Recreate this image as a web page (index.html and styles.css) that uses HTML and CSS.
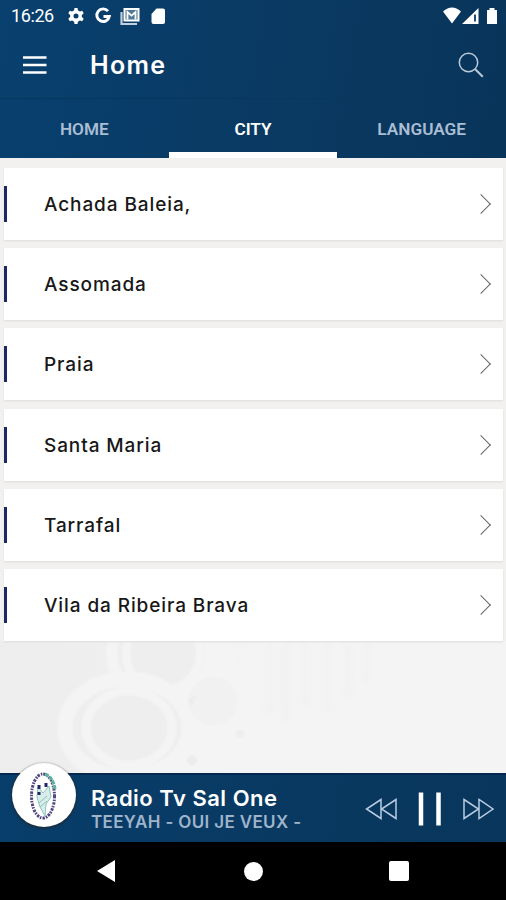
FILE: index.html
```html
<!DOCTYPE html>
<html lang="en">
<head>
<meta charset="utf-8">
<title>Home</title>
<link rel="stylesheet" href="styles.css">
</head>
<body>
<div class="app">
  <header class="header">
    <div class="status">
      <span class="clock">16:26</span>
      <svg class="notices" width="98" height="20" viewBox="0 0 98 20">
        <g fill="#fff">
          <circle cx="8" cy="10" r="4.200" fill="none" stroke="#fff" stroke-width="3.400"/>
          <path d="M6.500 2h3l.6 3h-4.200zM6.500 18h3l.6-3h-4.200zM.3 7.300l1.500-2.500 2.900 1-2.100 3.600zM15.700 7.300l-1.500-2.500-2.900 1 2.100 3.600zM.3 12.700l1.500 2.500 2.900-1-2.100-3.600zM15.700 12.700l-1.500 2.500-2.900-1 2.100-3.600z"/>
          <path d="M83.500 8l5-5.500H95q2 0 2 2V16q0 2-2 2h-9.500q-2 0-2-2z"/>
        </g>
        <path d="M40 5.200A6.300 6.300 0 1 0 41.300 10.500H35.500" fill="none" stroke="#fff" stroke-width="2.900"/>
        <rect x="56.500" y="3" width="14" height="11.500" fill="#dfe7ef" fill-opacity=".35" stroke="#fff" stroke-width="2"/>
        <path d="M59.500 13.500V6l4 3.600 4-3.600v7.500" fill="none" stroke="#fff" stroke-width="1.800"/>
        <path d="M53.500 6v12H69" fill="none" stroke="#c2cfde" stroke-width="2.200"/>
      </svg>
      <svg class="signals" width="58" height="20" viewBox="0 0 58 20">
        <path d="M3 5.500Q12-2.500 21 5.500L12 17.500z" fill="#fff"/>
        <path d="M38.500 2V18H22z" fill="#fff"/>
        <path d="M35 8.500v7" stroke="#0a3961" stroke-width="1.800"/>
        <path d="M47 4h2.500V2h5v2H57v14H47z" fill="#fff"/>
      </svg>
    </div>
    <div class="toolbar">
      <svg width="24" height="20" viewBox="0 0 24 20"><path d="M0 2.500h23.500M0 10h23.500M0 17.500h23.500" stroke="#fff" stroke-width="2.700"/></svg>
      <h1>Home</h1>
      <svg class="search" width="26" height="26" viewBox="0 0 26 26" fill="none" stroke="#b9c9d9" stroke-width="1.500"><circle cx="10.500" cy="10.500" r="9.200"/><path d="M17 17l7.800 7.800" stroke-width="2"/></svg>
    </div>
    <nav class="tabs"><span>HOME</span><span class="active">CITY</span><span>LANGUAGE</span></nav>
  </header>
  <main class="content">
    <svg class="backdrop" width="506" height="132" viewBox="0 0 506 132">
      <defs>
        <linearGradient id="fade"><stop offset="0" stop-color="#ededed"/><stop offset=".35" stop-color="#f0f0f0"/><stop offset=".55" stop-color="#f5f5f5"/></linearGradient>
        <filter id="soft"><feGaussianBlur stdDeviation="1.200"/></filter>
        <filter id="haze"><feGaussianBlur stdDeviation="3"/></filter>
      </defs>
      <rect width="506" height="132" fill="url(#fade)"/>
      <g filter="url(#soft)">
        <path d="M150 132L200 0H228Q236 16 241 34L280 0H506V132z" fill="#f4f4f4"/>
        <g fill="#eeeeee" stroke="#f4f4f4">
          <circle cx="161" cy="12" r="49" stroke-width="11"/>
          <circle cx="163" cy="12" r="37" stroke-width="8"/>
          <ellipse cx="127" cy="87" rx="62" ry="49" stroke-width="15"/>
          <ellipse cx="129" cy="87" rx="43" ry="37" stroke-width="9"/>
          <circle cx="213" cy="60" r="29" stroke-width="9" fill="#f1f1f1"/>
          <circle cx="240" cy="93" r="6" stroke-width="3"/>
        </g>
        <path d="M188 58l9-4-7 14zM186 119l6-6 6 6-6 7z" fill="#ececec"/>
      </g>
      <path d="M270 0v72M286 0v80M306 0v65M327 0v72M349 0v56M366 0v42" stroke="#eeeeee" stroke-width="8" opacity=".5" filter="url(#haze)"/>
    </svg>
    <ul class="cities">
      <li><span>Achada Baleia,</span><i class="chevron"></i></li>
      <li><span>Assomada</span><i class="chevron"></i></li>
      <li><span>Praia</span><i class="chevron"></i></li>
      <li><span>Santa Maria</span><i class="chevron"></i></li>
      <li><span>Tarrafal</span><i class="chevron"></i></li>
      <li><span>Vila da Ribeira Brava</span><i class="chevron"></i></li>
    </ul>
  </main>
  <footer class="player">
    <div class="cover">
      <svg width="64" height="64" viewBox="0 0 64 64" fill="none">
        <ellipse cx="31" cy="33" rx="11.500" ry="22" stroke="#51487f" stroke-width="3" stroke-dasharray="2.500 1.200 1.500 1"/>
        <path d="M33 11q8 3 10 15" stroke="#62b2a0" stroke-width="3.200" stroke-dasharray="4 1"/>
        <path d="M26 24l5 6 6-7 2 11-5 7-1 12-5-9-3-10z" fill="#d9ece9" stroke="#86c5bd"/>
        <path d="M27 22v4M34 20v4M27 29v3" stroke="#25256b" stroke-width="3"/>
        <path d="M27 40l8-7M28 44l7-6" stroke="#86c5bd"/>
      </svg>
    </div>
    <div class="track"><strong>Radio Tv Sal One</strong><span>TEEYAH - OUI JE VEUX -</span></div>
    <svg class="controls" width="130" height="36" viewBox="0 0 130 36" fill="none" stroke="#b8cbe0" stroke-width="1.500">
      <path d="M17 8.500v19L2.500 18zM32 8.500v19L17.500 18z"/>
      <path d="M57 1.500v33M74.500 1.500v33" stroke="#fff" stroke-width="4.500"/>
      <path d="M100 8.500v19L114.500 18zM115 8.500v19L129 18z"/>
    </svg>
  </footer>
  <div class="navbar">
    <svg width="18" height="22" viewBox="0 0 18 22"><path d="M18 0v22L0 11z" fill="#fff"/></svg>
    <i class="home"></i>
    <i class="recent"></i>
  </div>
</div>
</body>
</html>
```
FILE: styles.css
```css
* { box-sizing: border-box; }
body { margin: 0; font-family: Inter, "Open Sans", sans-serif; }
.app { width: 506px; height: 900px; display: flex; flex-direction: column; background: #f2f1ef; overflow: hidden; }
.header { height: 158px; flex: none; background: linear-gradient(100deg, #08406f, #0a3961 60%, #08345a); color: #fff; display: flex; flex-direction: column; }
.status { height: 32px; flex: none; display: flex; align-items: center; padding: 1px 8px 1px 11px; }
.clock { font: 18px/20px Roboto, sans-serif; width: 57px; letter-spacing: -.4px; }
.signals { margin-left: auto; }
.toolbar { height: 66px; flex: none; display: flex; align-items: center; padding: 0 22px 0 23px; }
.toolbar h1 { margin: 0 0 0 43px; font-size: 25px; line-height: 30px; font-weight: 600; letter-spacing: 1.300px; }
.search { margin-left: auto; }
.tabs { height: 60px; display: grid; grid-template: 60px / repeat(3, 1fr); border-top: 1px solid #08375e; text-align: center; font: 600 17.200px/61px Roboto, sans-serif; color: #a9bdd3; }
.tabs .active { color: #fff; height: 59px; border-bottom: 6px solid #fff; }
.content { height: 615px; flex: none; position: relative; padding: 10px 3px 0 4px; }
.backdrop { position: absolute; left: 0; bottom: 0; }
.cities { position: relative; list-style: none; margin: 0; padding: 0; display: grid; gap: 8.200px; }
.cities li { height: 72px; background: #fff; display: flex; align-items: center; padding-right: 15px; box-shadow: 0 1px 2px #dcdcdc; font-size: 19px; font-weight: 500; letter-spacing: .9px; color: #181818; }
.cities li::before { content: ""; width: 3px; height: 36px; background: #1b2863; margin-right: 37px; }
.cities span { padding-top: 1px; }
.chevron { width: 14px; height: 14px; border: solid #666; border-width: 1.500px 1.500px 0 0; transform: rotate(45deg); margin-left: auto; }
.player { height: 69px; flex: none; display: flex; align-items: center; background: linear-gradient(100deg, #083e6b, #09385f 70%, #08365c); border-top: 2px solid #062750; padding: 0 12px; position: relative; }
.cover { width: 64px; height: 64px; border-radius: 50%; background: #fff; box-shadow: 0 1px 3px #222; margin-top: -27px; overflow: hidden; }
.track { margin-left: 15px; padding-top: 1px; display: flex; flex-direction: column; white-space: nowrap; }
.track strong { font-size: 22px; line-height: 26px; font-weight: 600; letter-spacing: .5px; color: #fff; }
.track span { font-size: 17px; line-height: 22px; font-weight: 600; letter-spacing: .35px; color: #9fb4cb; }
.controls { margin-left: auto; }
.navbar { flex: 1; background: #000; display: flex; align-items: center; padding-left: 97px; }
.home { width: 19px; height: 19px; border-radius: 50%; background: #fff; margin-left: 129px; }
.recent { width: 20px; height: 20px; border-radius: 2px; background: #fff; margin-left: 126px; }
```
